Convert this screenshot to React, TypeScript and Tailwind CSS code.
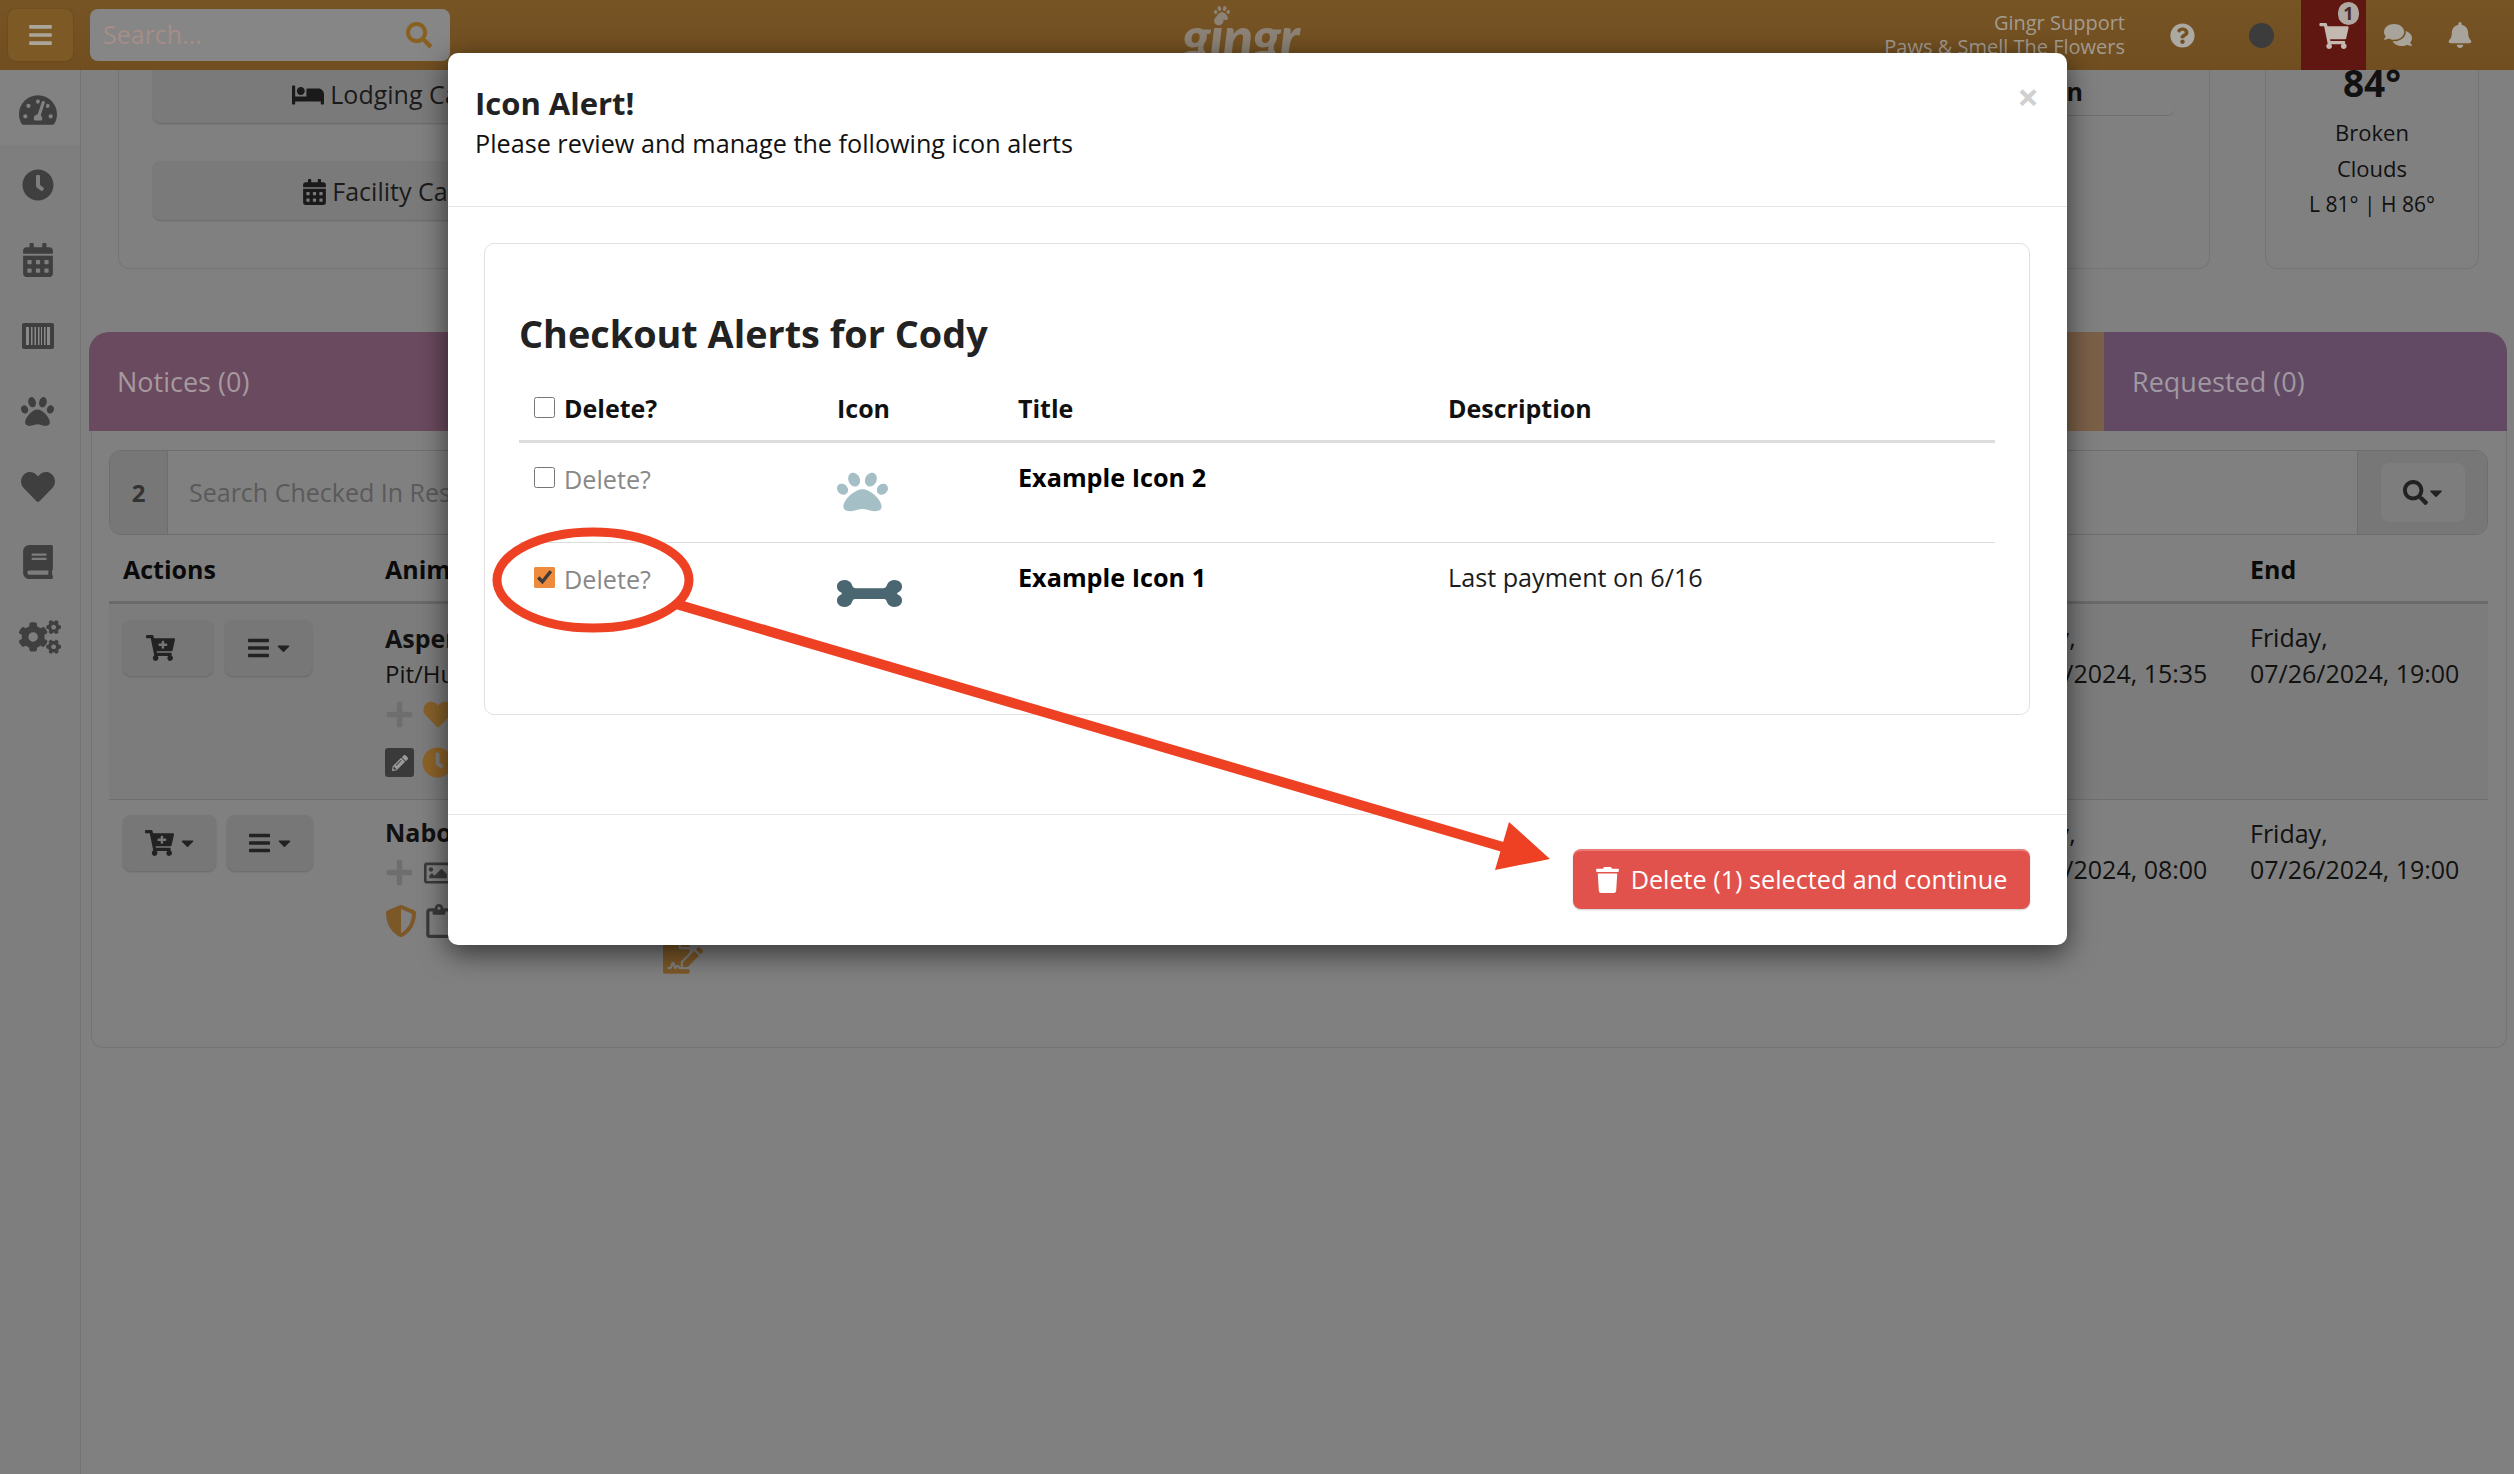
import {
  FaBars, FaBed, FaBell, FaBook, FaBone, FaCalendarAlt, FaCaretDown, FaCartPlus, FaClock, FaCogs, FaComments, FaFileSignature,
  FaHeart, FaPaw, FaPencilAlt, FaPlus, FaQuestionCircle, FaRegClipboard, FaRegImage, FaSearch, FaShieldAlt, FaShoppingCart, FaTachometerAlt, FaTrash,
} from "react-icons/fa";

function BarcodeBox() {
  return (
    <svg viewBox="0 0 32 26" className="h-[26px] w-[32px]">
      <rect width="32" height="26" rx="2" fill="#3f3f3f" />
      <path d="M4 4h3v18H4zM9 4h1.5v18H9zM12.5 4h1.5v18h-1.5zM16 4h1.5v18H16zM19 4h1v18h-1zM22 4h1.5v18H22zM25 4h3v18h-3z" fill="#8a8a8a" />
    </svg>
  );
}

const navIcons = [
  { icon: <FaTachometerAlt className="h-[34px] w-[38px]" />, active: true },
  { icon: <FaClock className="h-[32px] w-[32px]" /> },
  { icon: <FaCalendarAlt className="h-[34px] w-[30px]" /> },
  { icon: <BarcodeBox /> },
  { icon: <FaPaw className="h-[33px] w-[33px]" /> },
  { icon: <FaHeart className="h-[36px] w-[34px]" /> },
  { icon: <FaBook className="h-[34px] w-[30px]" /> },
  { icon: <FaCogs className="ml-[4px] h-[34px] w-[42px]" /> },
];

function ActionButton({ wide, cart, caret, inset }: { wide: string; cart?: boolean; caret?: boolean; inset?: string }) {
  return (
    <button className={`flex h-[56px] items-center justify-center gap-[6px] rounded-[8px] bg-[#777777] text-[#222222] shadow-[0_1px_2px_rgba(0,0,0,0.18)] ${wide} ${inset ?? ""}`}>
      {cart ? <FaCartPlus className="h-[26px] w-[29px]" /> : <FaBars className="h-[24px] w-[23px]" />}
      {caret && <FaCaretDown className="h-[20px] w-[15px]" />}
    </button>
  );
}

function DateCell({ time, date }: { time: string; date: string }) {
  return (
    <div className="whitespace-nowrap pl-[12px] pt-[15px] text-[25px] leading-[36px] text-[#111111]">
      <div>{date}</div>
      <div>{time}</div>
    </div>
  );
}

function Background() {
  return (
    <div className="flex h-full w-full flex-col bg-[#808080]">
      {/* Top bar */}
      <header className="flex h-[70px] shrink-0 items-center bg-gradient-to-b from-[#775424] to-[#704e20] pl-[8px] pr-[42px]">
        <button className="flex h-[52px] w-[65px] items-center justify-center rounded-[8px] bg-[#7c5925] text-[#aaa69c] shadow-[0_0_2px_rgba(0,0,0,0.2)]">
          <FaBars className="h-[26px] w-[23px]" />
        </button>
        <div className="ml-[17px] flex h-[52px] w-[360px] items-center justify-between rounded-[8px] bg-[#868686] pl-[13px] pr-[18px] text-[25px] text-[#a58d88]">
          <span>Search...</span>
          <FaSearch className="h-[26px] w-[26px] text-[#8a6020]" />
        </div>
        <div className="relative flex-1 self-stretch overflow-hidden">
          <FaPaw className="absolute left-[763px] top-[5px] h-[16px] w-[18px] text-[#8c8276]" />
          <span className="absolute left-[732px] top-[6px] font-['Lato',sans-serif] text-[56px] font-black italic leading-[60px] tracking-[-1px] text-[#8c8276]">gingr</span>
        </div>
        <div className="mr-[45px] text-right text-[20px] leading-[24px] text-[#a39b90]">
          <div>Gingr Support</div>
          <div>Paws &amp; Smell The Flowers</div>
        </div>
        <FaQuestionCircle className="h-[25px] w-[25px] text-[#aca9a2]" />
        <div className="ml-[54px] h-[25px] w-[25px] rounded-full bg-[#3c3c3c]" />
        <div className="relative ml-[27px] flex h-full w-[65px] items-center justify-center bg-[#611711]">
          <FaShoppingCart className="mt-[2px] h-[26px] w-[30px] text-[#c4b9b0]" />
          <span className="absolute left-[37px] top-[2px] flex h-[23px] w-[21px] items-center justify-center rounded-full bg-[#b0a8a2] text-[18px] font-bold text-[#4a2a20]">1</span>
        </div>
        <FaComments className="ml-[18px] h-[26px] w-[28px] text-[#a8a49c]" />
        <FaBell className="ml-[36px] h-[26px] w-[24px] text-[#a8a49c]" />
      </header>

      <div className="flex min-h-0 flex-1">
        {/* Sidebar */}
        <nav className="flex w-[81px] shrink-0 flex-col border-r border-[#747474] bg-[#7e7e7e] pr-[5px] text-[#3f3f3f]">
          {navIcons.map((item, i) => (
            <div key={i} className={`flex h-[75.4px] items-center justify-center pt-[4px] ${item.active ? "-mr-[5px] pr-[5px] bg-[#828282]" : ""}`}>{item.icon}</div>
          ))}
        </nav>

        <main className="flex min-w-0 flex-1 flex-col pl-[8px]">
          {/* Dashboard cards, scrolled partly under the top bar */}
          <div className="flex h-[199px] shrink-0 gap-[55px] pl-[29px] pr-[35px]">
            <section className="h-full flex-1 rounded-b-[12px] border border-t-0 border-[#747474] px-[34px]">
              <div className="flex justify-between">
                <div className="flex w-[520px] flex-col gap-[38px]">
                  <div className="flex h-[53px] items-center justify-center gap-[6px] rounded-b-[8px] bg-[#7a7a7a] pb-[4px] text-[25px] leading-none text-[#1a1a1a] shadow-[0_1px_2px_rgba(0,0,0,0.2)]">
                    <FaBed className="h-[26px] w-[32px]" /> Lodging Calendar
                  </div>
                  <div className="flex h-[59px] items-center justify-center gap-[6px] rounded-[8px] bg-[#7a7a7a] pt-[2px] text-[25px] leading-none text-[#1a1a1a] shadow-[0_1px_2px_rgba(0,0,0,0.2)]">
                    <FaCalendarAlt className="h-[26px] w-[23px]" /> Facility Calendar
                  </div>
                </div>
                <div className="flex h-[46px] w-[520px] items-center justify-end rounded-b-[8px] border-b border-[#6e6e6e] pb-[2px] pr-[92px] text-[25px] font-bold text-[#111111]">
                  n
                </div>
              </div>
            </section>
            <section className="flex h-full w-[214px] flex-col items-center rounded-b-[12px] border border-t-0 border-[#747474] text-[22px] leading-[36px] text-[#111111]">
              <div className="-mt-[9px] h-[44px] text-[37px] font-bold leading-[44px]">84°</div>
              <div className="mt-[9px]">Broken</div>
              <div>Clouds</div>
              <div className="text-[21px]">L 81° | H 86°</div>
            </section>
          </div>

          {/* Tabs */}
          <div className="mt-[63px] mr-[7px] flex h-[99px] shrink-0 overflow-hidden rounded-t-[20px]">
            <div className="flex flex-1 items-center bg-[#6a4a5e] pl-[28px] pt-[2px] text-[27px] text-[#a5999f]">Notices (0)</div>
            <div className="w-[60px] bg-[#7b6048]" />
            <div className="flex w-[403px] items-center bg-[#624a64] pl-[28px] pt-[2px] text-[27px] text-[#a098a2]">Requested (0)</div>
          </div>

          {/* Checked in panel */}
          <section className="mr-[7px] ml-[2px] h-[617px] rounded-b-[12px] border border-t-0 border-[#747474] pl-[17px] pr-[18px] pt-[19px]">
            <div className="flex h-[85px] rounded-[12px] border border-[#6e6e6e]">
              <div className="flex w-[58px] items-center justify-center rounded-l-[12px] border-r border-[#6e6e6e] bg-[#777777] text-[24px] font-bold text-[#333333]">2</div>
              <div className="flex flex-1 items-center pl-[21px] text-[25px] text-[#5a5a5a]">Search Checked In Reservations</div>
              <div className="flex w-[130px] items-center justify-center rounded-r-[12px] border-l border-[#6e6e6e] bg-[#777777]">
                <button className="flex h-[59px] w-[84px] items-center justify-center gap-[1px] rounded-[8px] bg-[#7d7d7d] text-[#222222]">
                  <FaSearch className="h-[25px] w-[25px]" />
                  <FaCaretDown className="h-[20px] w-[14px]" />
                </button>
              </div>
            </div>

            <div className="grid h-[69px] grid-cols-[264px_1fr_252px_250px] items-center border-b-[3px] border-[#6a6a6a] pt-[3px] text-[25px] font-bold text-[#0a0a0a]">
              <div className="pl-[14px]">Actions</div>
              <div className="pl-[12px]">Animal</div>
              <div className="pl-[12px]">Start</div>
              <div className="pl-[12px]">End</div>
            </div>

            <div className="grid h-[196px] grid-cols-[264px_1fr_252px_250px] border-b border-[#6e6e6e] bg-[#7c7c7c]">
              <div className="flex gap-[12px] pl-[14px] pt-[16px]">
                <ActionButton wide="w-[90px]" cart inset="pr-[16px]" />
                <ActionButton wide="w-[87px]" caret />
              </div>
              <div className="pl-[12px] pt-[16px] text-[24px] text-[#111111]">
                <div className="text-[25px] font-bold leading-[36px]">Aspen</div>
                <div className="leading-[36px]">Pit/Husky</div>
                <div className="mt-[8px] flex items-center gap-[8px]">
                  <FaPlus className="h-[29px] w-[29px] text-[#6e6e6e]" />
                  <FaHeart className="h-[29px] w-[32px] text-[#86602a]" />
                </div>
                <div className="mt-[18px] flex items-center gap-[8px]">
                  <span className="flex h-[29px] w-[29px] items-center justify-center rounded-[3px] bg-[#3a3a3a]">
                    <FaPencilAlt className="h-[16px] w-[16px] text-[#9a9a9a]" />
                  </span>
                  <FaClock className="h-[31px] w-[31px] text-[#8c6228]" />
                </div>
              </div>
              <DateCell date="Friday," time="07/26/2024, 15:35" />
              <DateCell date="Friday," time="07/26/2024, 19:00" />
            </div>

            <div className="grid grid-cols-[264px_1fr_252px_250px]">
              <div className="flex gap-[11px] pl-[14px] pt-[15px]">
                <ActionButton wide="w-[93px]" cart caret />
                <ActionButton wide="w-[86px]" caret />
              </div>
              <div className="pl-[12px] pt-[14px]">
                <div className="text-[25px] font-bold leading-[36px] text-[#111111]">Nabor</div>
                <div className="mt-[8px] flex items-center gap-[8px]">
                  <FaPlus className="h-[29px] w-[29px] text-[#6e6e6e]" />
                  <FaRegImage className="h-[28px] w-[32px] text-[#3a3a3a]" />
                </div>
                <div className="mt-[17px] flex items-center gap-[8px]">
                  <FaShieldAlt className="h-[34px] w-[32px] text-[#7c5828]" />
                  <FaRegClipboard className="h-[34px] w-[28px] text-[#3a3a3a]" />
                </div>
                <FaFileSignature className="ml-[278px] h-[36px] w-[40px] text-[#7c5828]" />
              </div>
              <DateCell date="Friday," time="07/26/2024, 08:00" />
              <DateCell date="Friday," time="07/26/2024, 19:00" />
            </div>
          </section>
        </main>
      </div>
    </div>
  );
}

function AlertRow({ title, description, checked, icon }: { title: string; description?: string; checked?: boolean; icon: React.ReactNode }) {
  return (
    <div className="grid h-[100px] grid-cols-[318px_181px_430px_1fr] border-b border-[#dddddd] text-[25.2px] last:border-b-0">
      <label className="flex h-[73px] items-center gap-[9px] pl-[15px] text-[#888888]">
        <input type="checkbox" readOnly checked={checked} className="mb-[5px] h-[21px] w-[21px] accent-[#ed8a3c]" />
        Delete?
      </label>
      <div>{icon}</div>
      <div className="pt-[16px] font-bold leading-[36px] text-black">{title}</div>
      <div className="pt-[16px] leading-[36px] text-[#1c1c1c]">{description}</div>
    </div>
  );
}

export default function App() {
  return (
    <div className="relative h-[1474px] w-[2514px] overflow-hidden font-['Open_Sans',sans-serif]">
      <Background />

      {/* Modal */}
      <div className="absolute left-[448px] top-[53px] flex h-[892px] w-[1619px] flex-col rounded-[10px] bg-white shadow-[0_8px_28px_rgba(0,0,0,0.6)]">
        <div className="relative h-[154px] shrink-0 border-b border-[#e5e5e5] px-[27px] pt-[29px] text-[#222222]">
          <h2 className="text-[31px] font-bold leading-[42px]">Icon Alert!</h2>
          <p className="text-[25.2px] leading-[38px] text-[#111111]">Please review and manage the following icon alerts</p>
          <span className="absolute right-[28px] top-[20px] text-[38px] font-bold leading-[46px] text-[#d0d0d0]">×</span>
        </div>
        <div className="flex-1 pl-[36px] pr-[37px] pt-[36px]">
          <div className="h-[472px] rounded-[10px] border border-[#e0e0e0] pl-[34px] pr-[34px] pt-[60px]">
            <h3 className="text-[37.8px] font-bold leading-[60px] text-[#222222]">Checkout Alerts for Cody</h3>
            <div className="mt-[14px] grid h-[65px] grid-cols-[318px_181px_430px_1fr] items-center border-b-[3px] border-[#dddddd] text-[25px] font-bold text-[#111111]">
              <label className="flex items-center gap-[9px] pl-[15px]">
                <input type="checkbox" readOnly className="mb-[3px] h-[21px] w-[21px]" />
                Delete?
              </label>
              <div>Icon</div>
              <div>Title</div>
              <div>Description</div>
            </div>
            <AlertRow title="Example Icon 2" icon={<FaPaw className="mt-[27px] h-[44px] w-[51px] text-[#a5bfc7]" preserveAspectRatio="none" />} />
            <AlertRow title="Example Icon 1" description="Last payment on 6/16" checked icon={<FaBone className="mt-[29px] h-[43px] w-[65px] text-[#4a6670]" preserveAspectRatio="none" />} />
          </div>
        </div>
        <div className="flex h-[131px] shrink-0 justify-end border-t border-[#e5e5e5] pr-[37px] pt-[34px]">
          <button className="flex h-[60px] w-[457px] items-center justify-center gap-[12px] rounded-[8px] border-t-2 border-[#ea7a74] bg-[#e2524c] text-[25.2px] text-white shadow-[0_1px_2px_rgba(0,0,0,0.2)]">
            <FaTrash className="h-[26px] w-[23px]" />
            Delete (1) selected and continue
          </button>
        </div>
      </div>

      {/* Red annotation drawn over the screenshot */}
      <svg className="pointer-events-none absolute left-0 top-0" width={2514} height={1474} viewBox="0 0 2514 1474">
        <ellipse cx={593} cy={580} rx={96} ry={48} fill="none" stroke="#ee4023" strokeWidth={9} />
        <path d="M676 604 L1503 847" stroke="#ee4023" strokeWidth={10} fill="none" />
        <polygon points="1509,822 1550,859 1495,870" fill="#ee4023" />
      </svg>
    </div>
  );
}
